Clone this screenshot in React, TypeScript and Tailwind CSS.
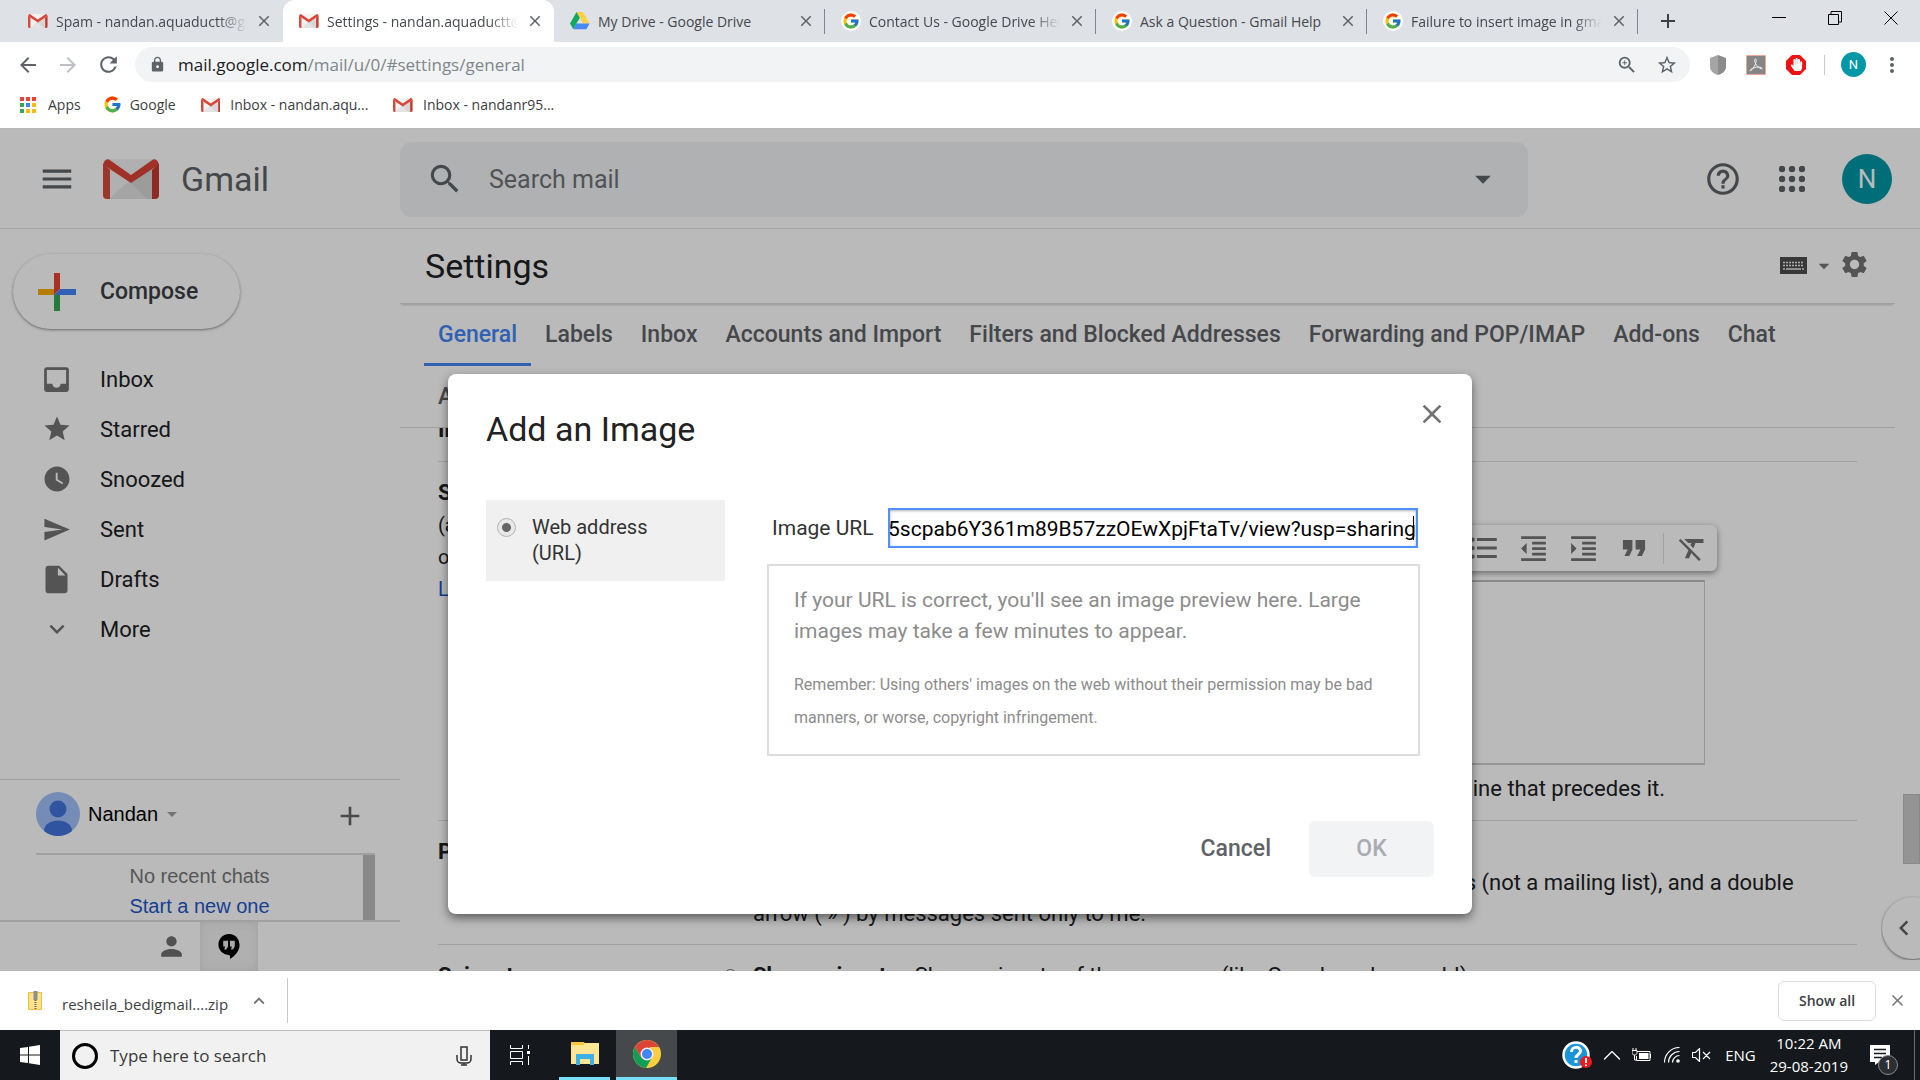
import { useEffect, useRef, useState, type ReactNode } from 'react';
import { FcGoogle } from 'react-icons/fc';
import { FaHandPaper } from 'react-icons/fa';
import {
  MdAdd,
  MdArrowBack,
  MdArrowDropDown,
  MdArrowForward,
  MdChevronLeft,
  MdClose,
  MdExpandLess,
  MdExpandMore,
  MdFormatClear,
  MdFormatIndentDecrease,
  MdFormatIndentIncrease,
  MdFormatListBulleted,
  MdFormatQuote,
  MdHelpOutline,
  MdInbox,
  MdInsertDriveFile,
  MdLock,
  MdMenu,
  MdMoreVert,
  MdPerson,
  MdRefresh,
  MdSearch,
  MdSend,
  MdSettings,
  MdStar,
  MdStarBorder,
  MdWatchLater,
  MdZoomIn,
} from 'react-icons/md';

function GmailLogo({ className }: { className?: string }) {
  return (
    <svg viewBox="0 0 56 40" className={className} aria-hidden="true">
      <path d="M4 0h48a4 4 0 0 1 4 4v32a4 4 0 0 1-4 4H4a4 4 0 0 1-4-4V4a4 4 0 0 1 4-4z" fill="#f2f2f2" />
      <path d="M6 40 28 20 50 40z" fill="#e3e3e3" />
      <path d="M28 24 50 8v32H44z" fill="#d6d6d6" />
      <path d="M0 4v32a4 4 0 0 0 4 4h3V11z" fill="#d54b3d" />
      <path d="M56 4v32a4 4 0 0 1-4 4h-3V11z" fill="#c53a2f" />
      <path d="M28 24 1.500 6.500A4 4 0 0 1 6 .5L28 16 50 .5a4 4 0 0 1 4.500 6z" fill="#db4437" />
    </svg>
  );
}

function DriveLogo({ className }: { className?: string }) {
  return (
    <svg viewBox="0 0 24 22" className={className} aria-hidden="true">
      <path d="M8 0h8l8 14h-8z" fill="#ffcf48" />
      <path d="M8 0l4 7L4 21 0 14z" fill="#11a861" />
      <path d="M8 14h16l-4 7H4z" fill="#4688f4" />
    </svg>
  );
}

function GoogleFavicon() {
  return (
    <span className="flex size-5 items-center justify-center rounded-full bg-white">
      <FcGoogle size={18} />
    </span>
  );
}

function ChromeLogo() {
  return (
    <svg viewBox="0 0 28 28" className="size-7" aria-hidden="true">
      <circle cx="14" cy="14" r="14" fill="#ffcd40" />
      <path d="M14 14 1.900 7A14 14 0 0 1 26.100 7H14z" fill="#db4437" />
      <path d="M1.900 7 8 17.500 14 14l3-7z" fill="#db4437" />
      <path d="M1.900 7A14 14 0 0 0 13 28l6-10.500-5 2.500-6-2.500z" fill="#0f9d58" />
      <circle cx="14" cy="14" r="6.500" fill="#f1f1f1" />
      <circle cx="14" cy="14" r="5" fill="#4285f4" />
    </svg>
  );
}

function KeyboardIcon() {
  return (
    <svg viewBox="0 0 27 17" className="h-[17px] w-[27px]" aria-hidden="true">
      <path d="M0 0h27v17H0z" fill="#4d4d4d" />
      <path d="M3 5.500h21M3 8.500h21M3 12h2M22 12h2" stroke="#ededed" strokeWidth="1.500" strokeDasharray="2 1" />
      <path d="M6 12h15" stroke="#ededed" strokeWidth="1.500" />
    </svg>
  );
}

const appColors = ['#ea4335', '#ea4335', '#ea4335', '#34a853', '#4285f4', '#fbbc05', '#34a853', '#fbbc05', '#fbbc05'];

interface BrowserTabProps {
  icon: ReactNode;
  title: string;
  active?: boolean;
  faded?: boolean;
  divider?: boolean;
}

function BrowserTab({ icon, title, active, faded, divider }: BrowserTabProps) {
  return (
    <div
      className={`relative flex h-full w-[271px] items-center pr-[10px] pl-4 ${active ? 'rounded-t-xl bg-white' : ''}`}
    >
      <span className="flex w-5 shrink-0 items-center justify-center">{icon}</span>
      <span
        className={`ml-2 flex-1 overflow-hidden text-[14px] whitespace-nowrap text-[#45484d] ${
          faded ? '[mask-image:linear-gradient(to_right,black_85%,transparent)]' : ''
        }`}
      >
        {title}
      </span>
      <button type="button" aria-label={`Close ${title}`} className="ml-2 text-[#5f6368]">
        <MdClose size={18} />
      </button>
      {divider && <span className="absolute top-[9px] right-0 h-[25px] w-px bg-[#80868b]" />}
    </div>
  );
}

function TabStrip() {
  return (
    <div className="flex h-[42px] shrink-0 items-center bg-[#dee1e6] pl-3">
      <BrowserTab icon={<GmailLogo className="h-[14px]" />} title="Spam - nandan.aquaductt@gmail.com" faded />
      <BrowserTab icon={<GmailLogo className="h-[14px]" />} title="Settings - nandan.aquaductt@gmail.com" active faded />
      <BrowserTab icon={<DriveLogo className="h-[18px]" />} title="My Drive - Google Drive" divider />
      <BrowserTab icon={<GoogleFavicon />} title="Contact Us - Google Drive Help" divider faded />
      <BrowserTab icon={<GoogleFavicon />} title="Ask a Question - Gmail Help" divider />
      <BrowserTab icon={<GoogleFavicon />} title="Failure to insert image in gmail" divider faded />
      <button type="button" aria-label="New tab" className="ml-[18px] text-[#3c4043]">
        <MdAdd size={24} />
      </button>
      <div className="ml-auto flex items-center gap-[42px] pr-[22px] pb-[6px]">
        <button type="button" aria-label="Minimize">
          <svg viewBox="0 0 14 14" className="size-[14px]" stroke="black" fill="none">
            <path d="M0 6.500h14" />
          </svg>
        </button>
        <button type="button" aria-label="Restore">
          <svg viewBox="0 0 14 14" className="size-[14px]" stroke="black" fill="none">
            <path d="M.5 3.500h10v10H.5zM3 3.500v-3h10.500v10.500H10.500" />
          </svg>
        </button>
        <button type="button" aria-label="Close">
          <svg viewBox="0 0 14 14" className="size-[14px]" stroke="black" fill="none">
            <path d="M.5.5l13 13M13.500.5l-13 13" />
          </svg>
        </button>
      </div>
    </div>
  );
}

function AddressBar() {
  return (
    <div className="flex h-[45px] shrink-0 items-center bg-white pl-4 text-[#5f6368]">
      <button type="button" aria-label="Back">
        <MdArrowBack size={24} />
      </button>
      <button type="button" aria-label="Forward" className="ml-4 text-[#bdc1c6]">
        <MdArrowForward size={24} />
      </button>
      <button type="button" aria-label="Reload" className="ml-4">
        <MdRefresh size={25} />
      </button>
      <div className="ml-[14px] flex h-[35px] flex-1 items-center rounded-full bg-[#f1f3f4] pr-3 pl-[14px]">
        <MdLock size={17} />
        <p className="ml-3 flex-1 text-[17px] text-[#80868b]">
          <span className="text-[#202124]">mail.google.com</span>/mail/u/0/#settings/general
        </p>
        <button type="button" aria-label="Zoom">
          <MdZoomIn size={22} />
        </button>
        <button type="button" aria-label="Bookmark this page" className="ml-[18px]">
          <MdStarBorder size={22} />
        </button>
      </div>
      <div className="flex items-center gap-5 pr-4 pl-5">
        <svg viewBox="0 0 16 20" className="h-5 w-4" aria-hidden="true">
          <path d="M8 0 0 3v9c0 4 4 7 8 8z" fill="#a5a5a5" />
          <path d="M8 0l8 3v9c0 4-4 7-8 8z" fill="#8c8c8c" />
        </svg>
        <svg viewBox="0 0 20 20" className="size-5" fill="none" aria-hidden="true">
          <path d="M.5.5h19v19H.5z" fill="#858585" stroke="#eba798" />
          <path
            d="M9.500 4c1.500 0 .5 4-1 7S4.500 16.500 4 15.500s5-3.500 8-3.500 4.500 1 4 1.800S11 12 9.500 8.500 8.500 4 9.500 4z"
            stroke="#eee"
          />
        </svg>
        <svg viewBox="0 0 20 20" className="size-5" aria-hidden="true">
          <path d="M6 0h8l6 6v8l-6 6H6l-6-6V6z" fill="#ed1111" />
          <FaHandPaper x={4} y={3} size={13} color="white" />
        </svg>
        <span className="-ml-[2px] h-5 w-px bg-[#c8cacc]" />
        <span className="-ml-1 flex size-[25px] items-center justify-center rounded-full bg-[#0097a7] font-[Roboto] text-[13px] text-white">
          N
        </span>
        <button type="button" aria-label="Customize" className="-ml-[6px]">
          <MdMoreVert size={24} />
        </button>
      </div>
    </div>
  );
}

function BookmarksBar() {
  return (
    <div className="flex h-[42px] shrink-0 items-center border-b border-[#b4b8ba] bg-white pb-[6px] pl-5 text-[14px] text-[#3c4043]">
      <a href="#apps" className="flex items-center gap-3">
        <svg viewBox="0 0 16 16" className="size-4" aria-hidden="true">
          {appColors.map((color, i) => (
            <rect key={i} x={(i % 3) * 6} y={Math.floor(i / 3) * 6} width="4" height="4" fill={color} />
          ))}
        </svg>
        Apps
      </a>
      <a href="#google" className="ml-[22px] flex items-center gap-2">
        <FcGoogle size={19} />
        Google
      </a>
      <a href="#inbox-1" className="ml-[25px] flex items-center gap-[10px]">
        <GmailLogo className="h-[14px]" />
        Inbox - nandan.aqu...
      </a>
      <a href="#inbox-2" className="ml-[25px] flex items-center gap-[10px]">
        <GmailLogo className="h-[14px]" />
        Inbox - nandanr95...
      </a>
    </div>
  );
}

function GmailHeader() {
  return (
    <header className="flex h-[100px] shrink-0 items-center border-b border-[#e4e4e4] pt-px pr-7 text-[#5f6368]">
      <div className="flex w-[400px] shrink-0 items-center pl-[38px]">
        <button type="button" aria-label="Main menu">
          <MdMenu size={38} />
        </button>
        <GmailLogo className="ml-[27px] h-10" />
        <span className="ml-[22px] text-[34px]">Gmail</span>
      </div>
      <div className="flex h-[75px] max-w-[1128px] flex-1 items-center rounded-xl bg-[#f1f3f4] pr-[26px] pl-[26px]">
        <MdSearch size={38} />
        <input
          aria-label="Search mail"
          placeholder="Search mail"
          className="ml-[25px] min-w-0 flex-1 bg-transparent pt-[2px] text-[25px] outline-none placeholder:text-[#6f7377]"
        />
        <button type="button" aria-label="Search options">
          <MdArrowDropDown size={38} />
        </button>
      </div>
      <div className="ml-auto flex items-center">
        <button type="button" aria-label="Help">
          <MdHelpOutline size={38} />
        </button>
        <button type="button" aria-label="Google apps" className="ml-[37px]">
          <svg viewBox="0 0 26 26" className="size-[26px]" fill="currentColor">
            {[3, 13, 23].map((y) => [3, 13, 23].map((x) => <circle key={`${x}-${y}`} cx={x} cy={y} r="3.200" />))}
          </svg>
        </button>
        <button
          type="button"
          aria-label="Account"
          className="ml-[37px] size-[50px] rounded-full bg-[#0097a7] font-[Roboto] text-[26px] text-white"
        >
          N
        </button>
      </div>
    </header>
  );
}

const folders = [
  { label: 'Inbox', icon: <MdInbox size={33} /> },
  { label: 'Starred', icon: <MdStar size={30} /> },
  { label: 'Snoozed', icon: <MdWatchLater size={30} /> },
  { label: 'Sent', icon: <MdSend size={29} /> },
  { label: 'Drafts', icon: <MdInsertDriveFile size={33} /> },
  { label: 'More', icon: <MdExpandMore size={30} /> },
];

function Sidebar() {
  return (
    <aside className="flex w-[400px] shrink-0 flex-col">
      <button
        type="button"
        className="mt-[25px] ml-[13px] flex h-[75px] w-[227px] items-center rounded-full bg-white pl-[25px] text-[23px] font-medium text-[#3c4043] shadow-[0_1px_3px_1px_rgba(60,64,67,0.15),0_1px_2px_rgba(60,64,67,0.4)]"
      >
        <svg viewBox="0 0 38 38" className="mr-6 size-[38px]" aria-hidden="true">
          <path d="M16 0h6v16l-6 6z" fill="#ea4335" />
          <path d="M0 16h16v6H0z" fill="#fbad05" />
          <path d="M22 16h16v6H16z" fill="#4285f4" />
          <path d="M16 22h6v16h-6z" fill="#34a853" />
        </svg>
        <span className="pt-[2px]">Compose</span>
      </button>
      <nav className="mt-[25px] font-[Roboto] text-[22px] text-[#202124]">
        {folders.map((folder) => (
          <a key={folder.label} href={`#${folder.label.toLowerCase()}`} className="flex h-[50px] items-center pl-10">
            <span className="mr-[27px] flex w-[33px] justify-center text-[#737373]">{folder.icon}</span>
            {folder.label}
          </a>
        ))}
      </nav>
      <div className="mt-auto border-t border-[#dadada] font-['Liberation_Sans'] text-xl">
        <div className="mr-[25px] ml-9 flex h-[75px] items-center border-b-2 border-[#dcdcdc] pb-[6px]">
          <svg viewBox="0 0 44 44" className="size-11" aria-hidden="true">
            <circle cx="22" cy="22" r="22" fill="#a1c2fa" />
            <circle cx="22" cy="17" r="8.500" fill="#4273dc" />
            <path d="M8 39c0-14 28-14 28 0a22 22 0 0 1-28 0z" fill="#4273dc" />
          </svg>
          <span className="ml-2">Nandan</span>
          <MdArrowDropDown size={24} className="ml-[2px] text-[#a0a0a0]" />
          <button type="button" aria-label="Start a conversation" className="ml-auto pt-1 pr-[9px] text-[#666]">
            <MdAdd size={32} />
          </button>
        </div>
        <div className="mr-[25px] ml-9 flex h-[65px]">
          <div className="flex-1 pt-[6px] text-center leading-[30px] text-[#777]">
            <p>No recent chats</p>
            <a href="#new-chat" className="text-[#1f57c9]">
              Start a new one
            </a>
          </div>
          <span className="w-3 bg-[#bcbcbc]" />
        </div>
        <div className="flex h-[51px] border-t-2 border-[#dcdcdc] pl-[142px]">
          <button type="button" aria-label="Contacts" className="flex w-[58px] items-center justify-center text-[#6f6f6f]">
            <MdPerson size={31} />
          </button>
          <button
            type="button"
            aria-label="Hangouts"
            className="flex w-[58px] items-center justify-center bg-[#f1f1f1] shadow-[inset_0_0_8px_#dcdcdc]"
          >
            <svg viewBox="0 0 22 26" className="h-[25px] w-[22px]">
              <path d="M11 0a11 11 0 0 1 11 11c0 7-5 12-10 15v-4h-1A11 11 0 0 1 11 0z" fill="black" />
              <path d="M5 7h5v6l-2 3H6l1-3H5zM12 7h5v6l-2 3h-2l1-3h-2z" fill="#e8e8e8" />
            </svg>
          </button>
        </div>
      </div>
    </aside>
  );
}

const settingsTabs = [
  'General',
  'Labels',
  'Inbox',
  'Accounts and Import',
  'Filters and Blocked Addresses',
  'Forwarding and POP/IMAP',
  'Add-ons',
  'Chat',
  'Advanced',
  'Offline',
  'Themes',
];

function SettingsRow({ title, note, children }: { title: string; note?: ReactNode; children?: ReactNode }) {
  return (
    <div className="flex border-b border-[#dcdcdc] py-[15px]">
      <div className="w-[286px] shrink-0 leading-8">
        <p className="font-bold">{title}</p>
        {note}
      </div>
      <div className="min-w-0 flex-1">{children}</div>
    </div>
  );
}

function RadioLine({ name, strong, children }: { name: string; strong: string; children?: ReactNode }) {
  return (
    <label className="flex max-w-[1100px] leading-[31px]">
      <input type="radio" name={name} className="mt-[9px] mr-4 size-[13px] shrink-0" />
      <span>
        <b>{strong}</b>
        {children}
      </span>
    </label>
  );
}

function SignatureEditor() {
  return (
    <div className="-mb-2 pt-12 pl-[29px]">
      <div className="flex h-[46px] w-[964px] items-center justify-end rounded-md bg-white pr-2 text-[#737373] shadow-[0_2px_6px_rgba(0,0,0,0.45)]">
        <button type="button" aria-label="Bulleted list" className="mr-4">
          <MdFormatListBulleted size={34} />
        </button>
        <button type="button" aria-label="Indent less" className="mr-[17px]">
          <MdFormatIndentDecrease size={33} />
        </button>
        <button type="button" aria-label="Indent more" className="mr-[15px]">
          <MdFormatIndentIncrease size={33} />
        </button>
        <button type="button" aria-label="Quote" className="mr-[10px]">
          <MdFormatQuote size={38} />
        </button>
        <span className="mr-3 h-[31px] w-px bg-[#ddd]" />
        <button type="button" aria-label="Remove formatting">
          <MdFormatClear size={33} />
        </button>
      </div>
      <textarea
        aria-label="Signature"
        className="mt-[9px] block h-[185px] w-[952px] resize-none border-2 border-r border-[#d0d0d0] border-t-[#bcbcbc] bg-transparent"
      />
      <label className="flex w-[912px] items-center justify-end leading-[48px] whitespace-nowrap">
        <input type="checkbox" className="mr-2 size-[13px]" />
        Insert this signature before quoted text in replies and remove the "--" line that precedes it.
      </label>
    </div>
  );
}

function SettingsPanel() {
  return (
    <section className="flex min-w-0 flex-1 flex-col">
      <div className="mr-[25px] flex h-[75px] shrink-0 items-center border-b border-[#dcdcdc] pr-[25px] pb-px pl-[25px] shadow-[0_3px_2px_-2px_rgba(0,0,0,0.2)]">
        <h1 className="mr-auto pt-[2px] text-[34px] text-[#202124]">Settings</h1>
        <KeyboardIcon />
        <MdArrowDropDown size={26} className="ml-1 text-[#777]" />
        <button type="button" aria-label="Settings menu" className="ml-[2px] pb-[2px] text-[#737373]">
          <MdSettings size={31} />
        </button>
      </div>
      <nav className="mr-[25px] flex h-31 shrink-0 flex-wrap border-b border-[#dcdcdc] pr-20 pl-6 text-[23px] font-medium text-[#5f6368]">
        {settingsTabs.map((tab, i) => (
          <a
            key={tab}
            href={`#${tab}`}
            className={`h-[62px] px-[14px] leading-[62px] ${i === 0 ? 'border-b-3 border-[#4285f4] text-[#4285f4]' : ''}`}
          >
            {tab}
          </a>
        ))}
      </nav>
      <div className="min-h-0 flex-1 overflow-hidden pr-[63px] pl-[38px] font-[Roboto] text-[22px] text-[#202124]">
        <div className="-mt-[29px]">
          <SettingsRow title="Importance signals for ads:" />
          <SettingsRow
            title="Signature:"
            note={
              <>
                <p className="text-xl leading-8">(appended at the end of all</p>
                <p className="text-xl leading-8">outgoing messages)</p>
                <a href="#learn-more" className="text-xl text-[#15c]">
                  Learn more
                </a>
              </>
            }
          >
            <SignatureEditor />
          </SettingsRow>
          <SettingsRow title="Personal level indicators:">
            <RadioLine name="indicators" strong="No indicators" />
            <RadioLine name="indicators" strong="Show indicators">
              {' '}
              - Display an arrow (<b className="px-4">›</b>) by messages sent to my address (not a mailing list), and a
              double arrow ( » ) by messages sent only to me.
            </RadioLine>
          </SettingsRow>
          <SettingsRow title="Snippets:">
            <RadioLine name="snippets" strong="Show snippets">
              {' '}
              - Show snippets of the message (like Google web search!).
            </RadioLine>
          </SettingsRow>
        </div>
      </div>
    </section>
  );
}

function AddImageDialog() {
  const inputRef = useRef<HTMLInputElement>(null);
  const [url, setUrl] = useState('_5scpab6Y361m89B57zzOEwXpjFtaTv/view?usp=sharing');

  // keep the end of a long address in view
  useEffect(() => {
    const input = inputRef.current;
    if (!input) return;
    input.focus();
    input.setSelectionRange(input.value.length, input.value.length);
    input.scrollLeft = input.scrollWidth;
  }, []);

  return (
    <div
      role="dialog"
      aria-labelledby="dialog-title"
      className="relative w-[1024px] rounded-lg bg-white pt-[29px] pr-[38px] pb-[37px] pl-[38px] font-[Roboto] text-[#222] shadow-[0_4px_10px_rgba(0,0,0,0.5)]"
    >
      <button type="button" aria-label="Close" className="absolute top-6 right-6 text-[#737373]">
        <MdClose size={32} />
      </button>
      <h2 id="dialog-title" className="text-[34px] leading-[52px]">
        Add an Image
      </h2>
      <div className="mt-[45px] flex items-start">
        <label className="flex h-[81px] w-[239px] gap-4 bg-[#f0f0f0] pt-[14px] pl-[11px] text-xl leading-[26px] text-[#333]">
          <input
            type="radio"
            name="source"
            defaultChecked
            className="mt-1 size-[19px] shrink-0 appearance-none rounded-full border border-[#b4b4b4] bg-[radial-gradient(circle,#666_0_4px,#e8e8e8_5px)]"
          />
          <span className="w-[140px]">Web address (URL)</span>
        </label>
        <div className="ml-[42px] flex-1 pr-[14px]">
          <div className="mt-2 flex items-center pr-[2px] pl-[5px]">
            <label htmlFor="image-url" className="mr-[14px] shrink-0 pt-[2px] text-[21px] text-[#333]">
              Image URL
            </label>
            <span className="relative flex-1">
              <input
                id="image-url"
                ref={inputRef}
                value={url}
                onChange={(e) => setUrl(e.target.value)}
                className="h-10 w-full border-2 border-[#4d90fe] pt-[2px] text-[21px] text-black caret-transparent shadow-[inset_0_1px_3px_rgba(0,0,0,0.3)] outline-none"
              />
              <span className="absolute top-2 right-1 h-6 w-px bg-black" />
            </span>
          </div>
          <div className="mt-4 h-48 border-2 border-[#dcdcdc] px-[25px] pt-[19px] text-[#8c8c8c]">
            <p className="text-[21px] leading-[31px]">
              If your URL is correct, you'll see an image preview here. Large images may take a few minutes to appear.
            </p>
            <p className="mt-[21px] text-[16px] leading-[33px]">
              Remember: Using others' images on the web without their permission may be bad manners, or worse, copyright
              infringement.
            </p>
          </div>
        </div>
      </div>
      <div className="mt-[65px] flex items-center justify-end text-[23px] font-medium">
        <button type="button" className="mr-[38px] text-[#5f6368]">
          Cancel
        </button>
        <button type="button" disabled className="h-14 w-[125px] rounded-md bg-[#f1f3f4] text-[#a9acb0]">
          OK
        </button>
      </div>
    </div>
  );
}

function DownloadBar() {
  return (
    <div className="flex h-[59px] shrink-0 items-center bg-white pl-7 text-[#3c4043]">
      <svg viewBox="0 0 14 19" className="h-[19px] w-[14px]" aria-hidden="true">
        <path d="M.5 1.500h13v17H.5z" fill="#ffe28a" stroke="#edbf3e" />
        <path d="M5.500 0h4v9h-4z" fill="#8b8f93" />
        <path d="M7.500 9v10" stroke="#666" strokeWidth="2" strokeDasharray="1 1" />
      </svg>
      <span className="mt-2 ml-5 text-[15px]">resheila_bedigmail....zip</span>
      <button type="button" aria-label="Download options" className="ml-5 text-[#777]">
        <MdExpandLess size={22} />
      </button>
      <span className="ml-[17px] h-[45px] w-px bg-[#c8c8c8]" />
      <button
        type="button"
        className="ml-auto h-10 w-[98px] rounded-md border border-[#dadce0] text-[14px] font-semibold text-[#3c4043]"
      >
        Show all
      </button>
      <button type="button" aria-label="Close downloads" className="ml-3 pr-[13px] text-[#777]">
        <MdClose size={19} />
      </button>
    </div>
  );
}

function Taskbar() {
  return (
    <div className="flex h-[50px] shrink-0 items-center bg-[#15191d] text-white">
      <button type="button" aria-label="Start" className="flex w-[60px] justify-center">
        <svg viewBox="0 0 20 20" className="size-5" fill="white">
          <path d="M0 3l8-1v7.500H0zM9 1.800 20 0v9.500H9zM0 10.500h8V18l-8-1zM9 10.500h11V20L9 18.200z" />
        </svg>
      </button>
      <div className="flex h-full w-[430px] items-center border-t border-[#bbb] bg-[#f1f1f1] pr-[18px] pl-[11px]">
        <svg viewBox="0 0 28 28" className="size-7" aria-hidden="true">
          <circle cx="14" cy="14" r="11.500" fill="none" stroke="black" strokeWidth="3" />
        </svg>
        <input
          aria-label="Type here to search"
          placeholder="Type here to search"
          className="ml-[11px] min-w-0 flex-1 bg-transparent text-[17px] outline-none placeholder:text-[#3a3a3a]"
        />
        <svg viewBox="0 0 16 20" className="h-5 w-4" fill="none" stroke="#333" strokeWidth="1.500" aria-hidden="true">
          <path d="M5 1h6v13H5zM1 9v4c0 2.500 2 4 4 4h6c2 0 4-1.500 4-4V9M8 17v2M5 19h6" />
        </svg>
      </div>
      <button type="button" aria-label="Task view" className="ml-5">
        <svg viewBox="0 0 20 20" className="size-5" fill="none" stroke="white">
          <path d="M.5 0v3.500h12V0M.5 20v-3.500h12V20M.5 6.500h12v7H.5zM18.500 0v4M18.500 11v9" />
          <path d="M17 6h3v3h-3z" fill="white" stroke="none" />
        </svg>
      </button>
      <button
        type="button"
        aria-label="File Explorer"
        className="ml-[29px] flex h-full w-[51px] items-center justify-center border-b-3 border-[#76e0fb]"
      >
        <svg viewBox="0 0 28 23" className="h-[23px] w-7">
          <path d="M0 0h12l2 1h14v21H0z" fill="#fde693" />
          <path d="M0 0h12l1 3H0z" fill="#fcc53c" />
          <path d="M5 12h18v11h-4v-6H9v6H5z" fill="#3bb1e8" />
        </svg>
      </button>
      <button
        type="button"
        aria-label="Google Chrome"
        className="ml-[6px] flex h-full w-[61px] items-center justify-center border-b-3 border-[#76e0fb] bg-[#45494b]"
      >
        <ChromeLogo />
      </button>
      <div className="ml-auto flex h-full items-center text-[15px]">
        <svg viewBox="0 0 30 28" className="h-7 w-[30px]" aria-hidden="true">
          <circle cx="14" cy="14" r="12.500" fill="#1b95d9" stroke="white" strokeWidth="2.500" />
          <path d="M9.500 11c0-6 9-6 9-1 0 3.500-4.500 3.500-4.500 7M14 19v3" fill="none" stroke="white" strokeWidth="3" />
          <circle cx="24" cy="21" r="6" fill="#f0181c" />
          <path d="M24 17v5M24 23.500v1.500" stroke="white" strokeWidth="2" />
        </svg>
        <svg viewBox="0 0 16 9" className="ml-3 h-[9px] w-4" fill="none" stroke="white" strokeWidth="1.300" aria-hidden="true">
          <path d="M0 8.500l8-8 8 8" />
        </svg>
        <svg viewBox="0 0 20 14" className="ml-3 h-[14px] w-5" fill="none" stroke="white" aria-hidden="true">
          <path d="M5 3.500h13v9H4.500V8M18.500 6v4M0 2.500h5v2C5 6 4 7 2.500 7S0 6 0 4.500zM1 0v2M4 0v2M2.500 7v5h2" />
          <path d="M7 5h9.500v6H7z" fill="white" stroke="none" />
        </svg>
        <svg viewBox="0 0 16 16" className="ml-3 size-4" fill="none" stroke="white" strokeWidth="1.200" aria-hidden="true">
          <path d="M.5 15.500A15 15 0 0 1 15.500.5M4.500 15.500a11 11 0 0 1 11-11M8.500 15.500a7 7 0 0 1 7-7" />
          <circle cx="14" cy="14" r="1.800" fill="white" stroke="none" />
        </svg>
        <svg viewBox="0 0 19 14" className="ml-3 h-[14px] w-[19px]" fill="none" stroke="white" strokeWidth="1.200" aria-hidden="true">
          <path d="M.5 4.500h3l4-4v13l-4-4h-3zM11 4l7 7M18 4l-7 7" />
        </svg>
        <span className="ml-[14px]">ENG</span>
        <div className="ml-[14px] text-center leading-[23px]">
          <p>10:22 AM</p>
          <p>29-08-2019</p>
        </div>
        <div className="relative ml-[22px] h-9 w-8">
          <svg viewBox="0 0 20 20" className="mt-2 size-5" aria-hidden="true">
            <path d="M0 0h20v17H9l-4 3v-3H0z" fill="white" />
            <path d="M4 4.500h12M4 8.500h12M4 12.500h8" stroke="#15191d" strokeWidth="1.300" />
          </svg>
          <span className="absolute right-1 -bottom-[2px] flex size-5 items-center justify-center rounded-full border border-[#888] bg-[#2b2f33] text-[13px]">
            1
          </span>
        </div>
        <span className="ml-3 h-full w-px bg-[#6b6e70]" />
        <span className="w-[5px]" />
      </div>
    </div>
  );
}

export default function App() {
  return (
    <div className="flex h-screen flex-col overflow-hidden font-['Open_Sans',sans-serif]">
      <TabStrip />
      <AddressBar />
      <BookmarksBar />
      <main className="relative flex min-h-0 flex-1 flex-col bg-white font-[Roboto]">
        <GmailHeader />
        <div className="flex min-h-0 flex-1">
          <Sidebar />
          <SettingsPanel />
        </div>
        <span className="absolute top-[665px] right-0 h-[70px] w-[17px] border border-[#bbb] bg-[#cbcbcb]" />
        <div className="absolute right-0 bottom-[11px] h-16 w-[39px] overflow-hidden pt-[1px] pl-[1px]">
          <button
            type="button"
            aria-label="Show side panel"
            className="flex size-[62px] items-center rounded-full bg-white pl-[7px] text-[#5f6368] shadow-[0_1px_3px_rgba(0,0,0,0.5)]"
          >
            <MdChevronLeft size={30} />
          </button>
        </div>
        <div className="absolute inset-0 flex items-start justify-center bg-black/27 pt-[245px]">
          <AddImageDialog />
        </div>
      </main>
      <DownloadBar />
      <Taskbar />
    </div>
  );
}
